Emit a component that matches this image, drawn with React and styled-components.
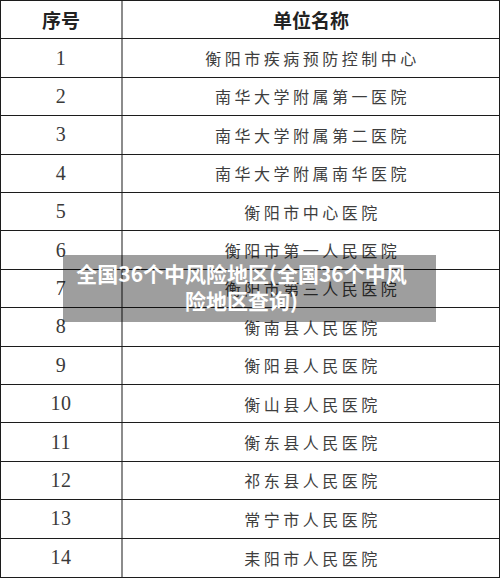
import React from "react";
import styled, { createGlobalStyle } from "styled-components";

const Global = createGlobalStyle`
  html, body { margin: 0; padding: 0; background: #fff; }
  body { font-family: "Noto Sans CJK SC", "Noto Sans", sans-serif; }
`;

const Page = styled.div`
  position: relative;
  width: 500px;
  height: 578px;
  overflow: hidden;
  background: #fff;
`;

const Table = styled.div`
  box-sizing: border-box;
  width: 500px;
  height: 578px;
  border: 1px solid #1c1c1c;
  display: grid;
  grid-template-rows: repeat(15, 1fr);
`;

const Row = styled.div`
  display: grid;
  grid-template-columns: 122px 1fr;
  border-bottom: ${(p) => (p.$last ? "none" : "1px solid #1c1c1c")};
  min-height: 0;
`;

const Cell = styled.div`
  display: flex;
  align-items: center;
  justify-content: center;
  min-width: 0;
`;

const NumCell = styled(Cell)`
  border-right: 2px solid #8c8c8c;
  font-family: "Liberation Serif", "Times New Roman", serif;
  font-size: 20px;
  color: #3a3a3a;
  letter-spacing: 0.5px;
`;

const NameCell = styled(Cell)`
  font-family: "Noto Sans CJK SC", sans-serif;
  font-size: 16px;
  font-weight: 400;
  color: #3e3e3e;
  letter-spacing: 3.5px;
  padding-left: 3px;
`;

const HeadNum = styled(NumCell)`
  font-family: "Noto Sans CJK SC", sans-serif;
  font-size: 19px;
  font-weight: 700;
  color: #222;
  letter-spacing: 0;
`;

const HeadName = styled(Cell)`
  font-family: "Noto Sans CJK SC", sans-serif;
  font-size: 19px;
  font-weight: 700;
  color: #222;
`;

const Overlay = styled.div`
  position: absolute;
  left: 63px;
  top: 255px;
  width: 373px;
  height: 67px;
  box-sizing: border-box;
  padding: 5px 24px 7px 8px;
  background: rgba(0, 0, 0, 0.38);
  color: #fff;
  font-family: "Noto Sans CJK SC", sans-serif;
  font-weight: 700;
  font-size: 21px;
  line-height: 27px;
  text-align: center;
`;

const rows = [
  "衡阳市疾病预防控制中心",
  "南华大学附属第一医院",
  "南华大学附属第二医院",
  "南华大学附属南华医院",
  "衡阳市中心医院",
  "衡阳市第一人民医院",
  "衡阳市第三人民医院",
  "衡南县人民医院",
  "衡阳县人民医院",
  "衡山县人民医院",
  "衡东县人民医院",
  "祁东县人民医院",
  "常宁市人民医院",
  "耒阳市人民医院",
];

export default function App() {
  return (
    <>
      <Global />
      <Page>
        <Table>
          <Row>
            <HeadNum>序号</HeadNum>
            <HeadName>单位名称</HeadName>
          </Row>
          {rows.map((name, i) => (
            <Row key={i} $last={i === rows.length - 1}>
              <NumCell>{i + 1}</NumCell>
              <NameCell>{name}</NameCell>
            </Row>
          ))}
        </Table>
        <Overlay>全国36个中风险地区(全国36个中风险地区查询)</Overlay>
      </Page>
    </>
  );
}
